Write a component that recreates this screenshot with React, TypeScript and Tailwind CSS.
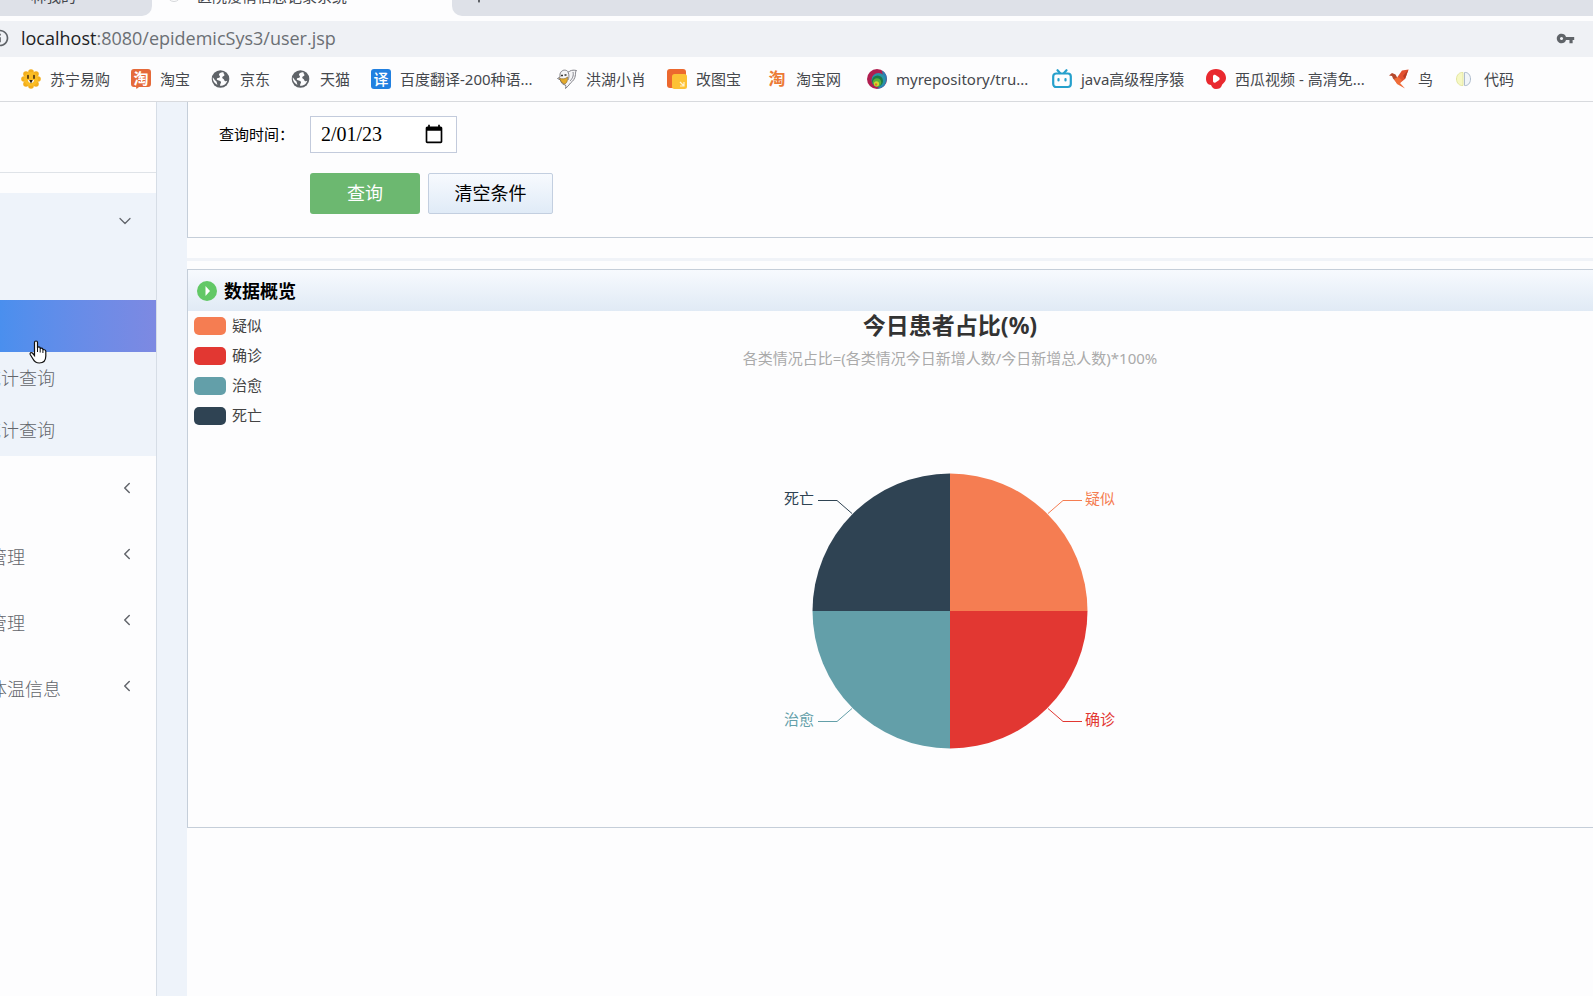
import { ReactNode } from "react";
import { ChevronDown, ChevronLeft, Plus } from "lucide-react";
import { MdInfoOutline, MdVpnKey } from "react-icons/md";

const App = () => {
    return (
        <div className="min-h-screen flex flex-col overflow-hidden bg-[#fdfdfe] font-['Noto_Sans','Noto_Sans_CJK_SC',sans-serif]">
            <Browser />
            <div className="flex flex-1">
                <Sidebar />
                <main className="flex-1 min-w-0 overflow-hidden">
                    <SearchForm />
                    <div className="mt-5 h-[3px] bg-[#f0f3f8]" />
                    <Overview />
                </main>
            </div>
            <Cursor />
        </div>
    )
}

const Browser = () => (
    <header className="border-b border-[#d8dade]">
        <div className="flex h-4 overflow-hidden text-[15px] leading-5 text-[#45484d] whitespace-nowrap">
            <div className="w-[152px] flex items-end gap-2 bg-[#dee1e8] rounded-br-[10px] pb-[10px] pl-1">
                <span>·</span>
                <span>一林我的</span>
            </div>
            <div className="w-[300px] flex items-end pb-[10px] pl-[15px]">
                <span className="size-[14px] mb-1 mr-4 rounded-full border border-[#d5d7da]" />
                医院疫情信息记录系统
            </div>
            <div className="flex-1 flex items-end bg-[#dee1e8] rounded-bl-[10px] pb-[10px] pl-[17px]">
                <Plus className="size-5" />
            </div>
        </div>
        <div className="mt-[5px] h-9 flex items-center bg-[#eff1f5] pr-[18px] pb-[2px] text-[#5f6368]">
            <MdInfoOutline className="size-5 -ml-[10px] mr-[11px] shrink-0" />
            <p className="flex-1 font-['Open_Sans',sans-serif] text-[18px] leading-6 text-[#6b6f74]"><span className="text-[#202124]">localhost</span>:8080/epidemicSys3/user.jsp</p>
            <MdVpnKey className="size-[19px]" />
        </div>
        <nav className="h-11 flex items-center pl-[21px] text-[15px] leading-5 text-[#45484d] whitespace-nowrap">
            <Bookmark width="w-[110px]" icon={<Lion />}>苏宁易购</Bookmark>
            <Bookmark width="w-20" icon={<Taobao />}>淘宝</Bookmark>
            <Bookmark width="w-20" icon={<Globe />}>京东</Bookmark>
            <Bookmark width="w-20" icon={<Globe />}>天猫</Bookmark>
            <Bookmark width="w-[186px]" icon={<Translate />}>百度翻译-200种语...</Bookmark>
            <Bookmark width="w-[110px]" icon={<Goose />}>洪湖小肖</Bookmark>
            <Bookmark width="w-[100px]" icon={<Squares />}>改图宝</Bookmark>
            <Bookmark width="w-[100px]" icon={<TaobaoText />}>淘宝网</Bookmark>
            <Bookmark width="w-[185px]" icon={<Rings />}>myrepository/tru...</Bookmark>
            <Bookmark width="w-[154px]" icon={<Bilibili />}>java高级程序猿</Bookmark>
            <Bookmark width="w-[183px]" icon={<Xigua />}>西瓜视频 - 高清免...</Bookmark>
            <Bookmark width="w-[66px]" icon={<Bird />}>鸟</Bookmark>
            <Bookmark width="w-20" icon={<Brain />}>代码</Bookmark>
        </nav>
    </header>
)

const Bookmark = ({ width, icon, children }: { width: string, icon: ReactNode, children: ReactNode }) => (
    <a href="#" className={`${width} shrink-0 flex items-center gap-[9px]`}>
        {icon}
        <span>{children}</span>
    </a>
)

const Sidebar = () => (
    <aside className="w-[187px] shrink-0 flex bg-[#eef3fa]">
        <nav className="w-[157px] overflow-hidden bg-[#fdfdfe] border-r border-[#d6dde6] text-[18px] leading-6 font-light text-[#62656b] whitespace-nowrap">
            <div className="h-[71px] border-b border-[#dfe3e8]" />
            <div className="mt-5 bg-[#eef3fa]">
                <button className="w-full h-[55px] flex items-center justify-end pr-[21px]" aria-label="展开"><ChevronDown className="size-5" strokeWidth={1.5} /></button>
                <div className="h-[52px]" />
                <div className="h-[52px] bg-linear-to-r from-[#4a8fee] to-[#7d89e2]" />
                <a href="#" className="h-[52px] flex items-center -ml-[17px]">统计查询</a>
                <a href="#" className="h-[52px] flex items-center -ml-[17px]">统计查询</a>
            </div>
            <MenuItem />
            <MenuItem>管理</MenuItem>
            <MenuItem>管理</MenuItem>
            <MenuItem>体温信息</MenuItem>
        </nav>
    </aside>
)

const MenuItem = ({ children }: { children?: ReactNode }) => (
    <a href="#" className="h-[66px] flex items-center justify-between -ml-[11px] pr-5">
        <span className="pt-1">{children}</span>
        <ChevronLeft className="size-[18px] mb-[2px]" strokeWidth={2} />
    </a>
)

const SearchForm = () => (
    <form className="border-l border-b border-[#c5ced9] pt-[14px] pl-[31px] pb-[23px] text-black" onSubmit={(e) => e.preventDefault()}>
        <div className="flex items-center">
            <label htmlFor="date" className="w-[91px] pb-[2px] text-[15px] leading-5">查询时间：</label>
            <div className="w-[147px] h-[37px] flex items-center border border-[#c3cbdc] bg-white pl-[10px] pr-3 pb-[2px]">
                <input id="date" type="text" defaultValue="2/01/23" className="flex-1 min-w-0 font-['Liberation_Serif',serif] text-[20px] leading-6 outline-none" />
                <svg className="size-5" viewBox="0 0 24 24"><path d="M20 3h-1V1h-2v2H7V1H5v2H4c-1.1 0-2 .9-2 2v16c0 1.1.9 2 2 2h16c1.1 0 2-.9 2-2V5c0-1.1-.9-2-2-2zm0 18H4V8h16v13z" /></svg>
            </div>
        </div>
        <div className="mt-5 pl-[91px] flex gap-2 text-[18px] leading-6">
            <button type="submit" className="w-[110px] h-[41px] pb-[2px] rounded-[3px] bg-[#6cb870] text-white">查询</button>
            <button type="reset" className="w-[125px] h-[41px] pb-[2px] rounded-[2px] border border-[#c3cfe0] bg-linear-to-b from-[#f7fafe] to-[#e0ebf7]">清空条件</button>
        </div>
    </form>
)

const legend = [
    { name: "疑似", color: "bg-[#f57d52]" },
    { name: "确诊", color: "bg-[#e23732]" },
    { name: "治愈", color: "bg-[#639fa9]" },
    { name: "死亡", color: "bg-[#2f4353]" },
]

const Overview = () => (
    <section className="mt-2 min-w-[1526px] border border-[#c5ced9]">
        <h2 className="h-[41px] flex items-center gap-[7px] pl-[9px] bg-linear-to-b from-[#f7fafe] to-[#e0eaf5] text-[18px] leading-6 font-bold text-black">
            <svg className="size-5" viewBox="0 0 20 20">
                <circle cx="10" cy="10" r="10" fill="#62c866" />
                <path d="M8.500 5l4.500 5-4.500 5z" fill="#fff" />
            </svg>
            数据概览
        </h2>
        <div className="grid">
            <ul className="col-start-1 row-start-1 justify-self-start pl-[6px] text-[15px] text-[#444]">
                {legend.map((item) => (
                    <li key={item.name} className="h-[30px] flex items-center gap-[6px] leading-5">
                        <span className={`w-8 h-[18px] rounded-[5px] ${item.color}`} />
                        <span className="pb-[3px]">{item.name}</span>
                    </li>
                ))}
            </ul>
            <div className="col-start-1 row-start-1 flex flex-col items-center pb-[66px]">
                <h3 className="text-[23px] leading-[28px] mb-[2px] font-bold text-[#333]">今日患者占比(%)</h3>
                <p className="text-[15px] leading-[34px] text-[#aaa]">各类情况占比=(各类情况今日新增人数/今日新增总人数)*100%</p>
                <Pie />
            </div>
        </div>
    </section>
)

const Pie = () => (
    <svg className="mt-[76px] w-[360px] h-[310px] text-[15px]" viewBox="0 0 360 310">
        <path d="M180 160V22.500A137.500 137.500 0 0 1 317.500 160z" fill="#f57d52" />
        <path d="M180 160H317.500A137.500 137.500 0 0 1 180 297.500z" fill="#e23732" />
        <path d="M180 160V297.500A137.500 137.500 0 0 1 42.500 160z" fill="#639fa9" />
        <path d="M180 160H42.500A137.500 137.500 0 0 1 180 22.500z" fill="#2f4353" />
        <g fill="none" strokeWidth="1">
            <path d="M278 62.500L293 49.500H312" stroke="#f57d52" />
            <path d="M278 257.500L293 270.500H312" stroke="#e23732" />
            <path d="M82 257.500L67 270.500H48" stroke="#639fa9" />
            <path d="M82 62.500L67 49.500H48" stroke="#2f4353" />
        </g>
        <text x="315" y="53" fill="#f57d52">疑似</text>
        <text x="315" y="274" fill="#e23732">确诊</text>
        <text x="44" y="274" textAnchor="end" fill="#639fa9">治愈</text>
        <text x="44" y="53" textAnchor="end" fill="#2f4353">死亡</text>
    </svg>
)

const Cursor = () => (
    <svg className="absolute left-[29px] top-[340px] w-[18px] h-6" viewBox="0 0 18 24">
        <path d="M5.500 13V2.500a1.500 1.500 0 0 1 3 0V8c0-1.500 2.700-1.300 2.700 0v1c.2-1.300 2.700-1 2.700.4v1c.3-1.200 2.900-.9 2.900.9V16c0 4.500-2.500 7-6.500 7-3.300 0-5-1.500-6.300-4L1.200 14.500c-.6-1.500 1-2.600 2.200-1.500l2.100 2.500z" fill="#fff" stroke="#111" strokeWidth="1.200" />
        <path d="M8.500 8v4M11.200 9v3.500M13.900 10.400v2.600" stroke="#111" strokeWidth="1" />
    </svg>
)

const Lion = () => (
    <svg className="size-5" viewBox="0 0 20 20">
        <g fill="#f3ae1c">
            <circle cx="10" cy="3" r="2.800" /><circle cx="15" cy="5" r="2.800" /><circle cx="17" cy="10" r="2.800" />
            <circle cx="15" cy="15" r="2.800" /><circle cx="10" cy="17" r="2.800" /><circle cx="5" cy="15" r="2.800" />
            <circle cx="3" cy="10" r="2.800" /><circle cx="5" cy="5" r="2.800" />
        </g>
        <circle cx="10" cy="10" r="7" fill="#fbbd24" />
        <path d="M7 11h6c0 4-6 4-6 0z" fill="#fff" />
        <path d="M8.200 11h3.600L10 14.500z" fill="#2d1d12" />
        <path d="M7 6.500v2.800M13 6.500v2.800" stroke="#3a2412" strokeWidth="1.500" strokeLinecap="round" />
    </svg>
)

const Globe = () => (
    <svg className="size-5" viewBox="0 0 20 20">
        <circle cx="9.500" cy="10" r="8.800" fill="#5f6368" />
        <path d="M12.500 3.200c-2.500-.3-4.500.8-4.500 2.300 0 1.200 1 1.300 1 2.300 0 1.400-3.200.8-3.200 2.400C5.800 11.500 9.500 11 10 13c.2 1-1 1.600-1 3.800 3.500.2 6.500-1.800 7.200-5-1.500.8-2.700.4-3-.8-.3-1.400-2-1-2-2.400 0-1.300 2.300-1.200 2.300-2.600 0-1-1.300-1.300-1-2.800z" fill="#fdfdfe" />
        <path d="M1.800 8.200c1.300 1.300 1.600 3 3.200 3.800 1.200.7.500 2 1.500 3.800C3.500 14.500 1.500 11.500 1.800 8.200z" fill="#fdfdfe" />
    </svg>
)

const Taobao = () => (
    <svg className="size-5" viewBox="0 0 20 20">
        <path d="M3 0h14a3 3 0 0 1 3 3v12a3 3 0 0 1-3 3H8l-2.500 2L5 18H3a3 3 0 0 1-3-3V3a3 3 0 0 1 3-3z" fill="#e56a3a" />
        <text x="10" y="14.500" textAnchor="middle" fontSize="15" fontWeight="700" fill="#fff">淘</text>
    </svg>
)

const TaobaoText = () => (
    <svg className="size-5" viewBox="0 0 20 20">
        <text x="10" y="16" textAnchor="middle" fontSize="17" fontWeight="700" fill="#ec7a35">淘</text>
    </svg>
)

const Translate = () => (
    <svg className="size-5" viewBox="0 0 20 20">
        <rect width="20" height="20" rx="3" fill="#2180e0" />
        <text x="10" y="15.500" textAnchor="middle" fontSize="15" fontWeight="500" fill="#fff">译</text>
    </svg>
)

const Goose = () => (
    <svg className="size-5" viewBox="0 0 20 20">
        <path d="M3 5C4 1.500 7 .5 9.500 1.500 11 3 12 3 13 2c2-1 4-1 6.500-.5-1 1-1 2-1 4C18 10 16 12 13.500 14c-1.500 2-3 4-5 5.500.5-1.500.5-2.500 0-3.500-2.500 0-4.500-2-5-5L.5 9.500 3 8z" fill="#f4f4f6" stroke="#74747c" strokeWidth=".9" />
        <path d="M2.500 9c3 1.500 6 1 8-1 .5 3.500-1 7-3.500 7-2-1-3.500-3-4.500-6z" fill="#e4ab2c" stroke="#7b5a24" strokeWidth=".6" />
        <path d="M11 3c1.500 3 1 6 0 8M16 3c1 4-1 7-3 9" fill="none" stroke="#85858d" />
        <path d="M4 6.500h2M7.500 6h2" stroke="#333" strokeWidth="1.500" />
    </svg>
)

const Squares = () => (
    <svg className="size-5" viewBox="0 0 20 20">
        <path d="M3 0h13a3 3 0 0 1 3 3v4L7 19H3a3 3 0 0 1-3-3V3a3 3 0 0 1 3-3z" fill="#ec682e" />
        <rect x="5" y="5" width="15" height="15" rx="2.500" fill="#fdc135" />
        <path d="M13 13l4 4m0-4v4h-4" fill="none" stroke="#fff3cf" strokeWidth="1.200" />
    </svg>
)

const Rings = () => (
    <svg className="size-5" viewBox="0 0 20 20">
        <circle cx="10" cy="10" r="10" fill="#b01e50" />
        <path d="M15 1.500a10 10 0 0 1-5 18.500c5-4 7-10 5-18.500z" fill="#2b7fb5" />
        <circle cx="11.500" cy="11" r="7" fill="#2a93a8" />
        <circle cx="10.500" cy="12" r="5.500" fill="#1f7a44" />
        <circle cx="10" cy="13.500" r="4.200" fill="#59b03c" />
        <circle cx="9.500" cy="14.800" r="2.600" fill="#d3d82f" />
        <circle cx="9" cy="15.500" r="1.200" fill="#e8722c" />
    </svg>
)

const Bilibili = () => (
    <svg className="size-5" viewBox="0 0 20 20" fill="none" stroke="#25a0cc" strokeWidth="2.200" strokeLinecap="round">
        <rect x="1.200" y="4.500" width="17.600" height="13.500" rx="3" />
        <path d="M5.500 1.200L8 4M14.500 1.200L12 4M6.500 10v1.500M13.500 10v1.500" />
    </svg>
)

const Xigua = () => (
    <svg className="size-5" viewBox="0 0 20 20">
        <path d="M10 0c6 0 10 4 10 9 0 4-3 5-4 7-1 3-3 4-6 4-3 0-4-2-5-4-3 0-5-3-5-6C0 4 4 0 10 0z" fill="#e9292f" />
        <path d="M7 7.500c0-1.500 1.200-2 2.500-1.500l3 2c1.500 1 1.500 2.500 0 3.500l-3 2c-1.300.5-2.500 0-2.500-1.500z" fill="#fff" />
    </svg>
)

const Bird = () => (
    <svg className="size-5" viewBox="0 0 20 20">
        <path d="M0 6.500L3 4l3.500 1.500L9 10l-1 4-4-4.500L3 7z" fill="#b5482c" />
        <path d="M8.500 8L13 1.500 19.500.5 16 10l-5 4z" fill="#e2502f" />
        <path d="M19.500.5L16 10l-2-3z" fill="#b93a22" />
        <path d="M5 10l4-2 4 3-2 3 5 5.500L8 15z" fill="#ef6c38" />
    </svg>
)

const Brain = () => (
    <svg className="size-5" viewBox="0 0 20 20" strokeWidth="1">
        <path d="M8 3.500C4.500 3 1.500 6 1.500 10s3 7 6.500 6.500z" fill="#f6f8c4" stroke="#e3e6a0" />
        <path d="M9.500 3.500C13 3 15.500 6 15.500 10s-2.500 7-6 6.500z" fill="#f1f5f9" stroke="#aebccc" />
    </svg>
)

export default App
